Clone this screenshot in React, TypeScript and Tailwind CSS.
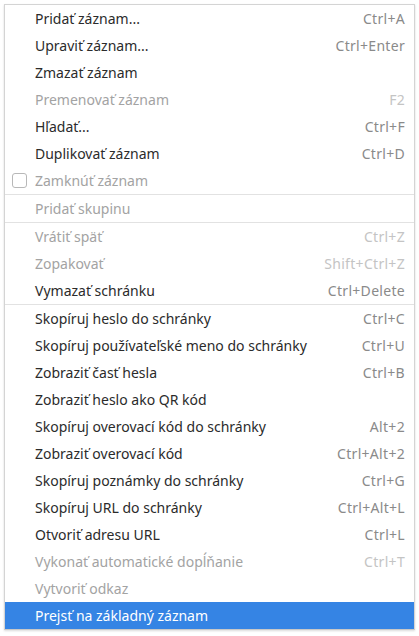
import React from "react";

type Item =
  | { sep: true }
  | { label: string; sc?: string; dis?: boolean; check?: boolean; active?: boolean; sep?: false };

const items: Item[] = [
  { label: "Pridať záznam...", sc: "Ctrl+A" },
  { label: "Upraviť záznam...", sc: "Ctrl+Enter" },
  { label: "Zmazať záznam" },
  { label: "Premenovať záznam", sc: "F2", dis: true },
  { label: "Hľadať...", sc: "Ctrl+F" },
  { label: "Duplikovať záznam", sc: "Ctrl+D" },
  { label: "Zamknúť záznam", dis: true, check: true },
  { sep: true },
  { label: "Pridať skupinu", dis: true },
  { sep: true },
  { label: "Vrátiť späť", sc: "Ctrl+Z", dis: true },
  { label: "Zopakovať", sc: "Shift+Ctrl+Z", dis: true },
  { label: "Vymazať schránku", sc: "Ctrl+Delete" },
  { sep: true },
  { label: "Skopíruj heslo do schránky", sc: "Ctrl+C" },
  { label: "Skopíruj používateľské meno do schránky", sc: "Ctrl+U" },
  { label: "Zobraziť časť hesla", sc: "Ctrl+B" },
  { label: "Zobraziť heslo ako QR kód" },
  { label: "Skopíruj overovací kód do schránky", sc: "Alt+2" },
  { label: "Zobraziť overovací kód", sc: "Ctrl+Alt+2" },
  { label: "Skopíruj poznámky do schránky", sc: "Ctrl+G" },
  { label: "Skopíruj URL do schránky", sc: "Ctrl+Alt+L" },
  { label: "Otvoriť adresu URL", sc: "Ctrl+L" },
  { label: "Vykonať automatické dopĺňanie", sc: "Ctrl+T", dis: true },
  { label: "Vytvoriť odkaz", dis: true },
  { label: "Prejsť na základný záznam", active: true },
];

export default function App() {
  return (
    <div
      className="w-[419px] h-[636px] bg-white pt-[4px] pl-[4px]"
      style={{ fontFamily: '"Noto Sans", "Open Sans", sans-serif' }}
    >
      <div className="w-[411px] border border-[#d4d4d4] border-b-[#c8c8c8] bg-white shadow-[0_1px_2px_rgba(0,0,0,0.15)] flex flex-col">
        {items.map((it, i) => {
          if (it.sep) return <div key={i} className="h-px bg-[#e2e2e2]" />;
          const color = it.active ? "text-white" : it.dis ? "text-[#a3a3a3]" : "text-[#2b2b2b]";
          const scColor = it.active ? "text-white" : it.dis ? "text-[#c4c4c4]" : "text-[#8a8a8a]";
          return (
            <div
              key={i}
              className={`h-[27px] flex items-center pl-[30px] pr-[9px] text-[14px] ${it.active ? "bg-[#3584e4]" : ""} ${color} relative`}
            >
              {it.check && (
                <span className="absolute left-[7px] top-[6px] w-[15px] h-[15px] rounded-[3px] border border-[#b8b8b8] bg-white" />
              )}
              <span className="flex-1 whitespace-nowrap">{it.label}</span>
              {it.sc && <span className={`whitespace-nowrap tracking-[0.3px] ${scColor}`}>{it.sc}</span>}
            </div>
          );
        })}
      </div>
    </div>
  );
}
